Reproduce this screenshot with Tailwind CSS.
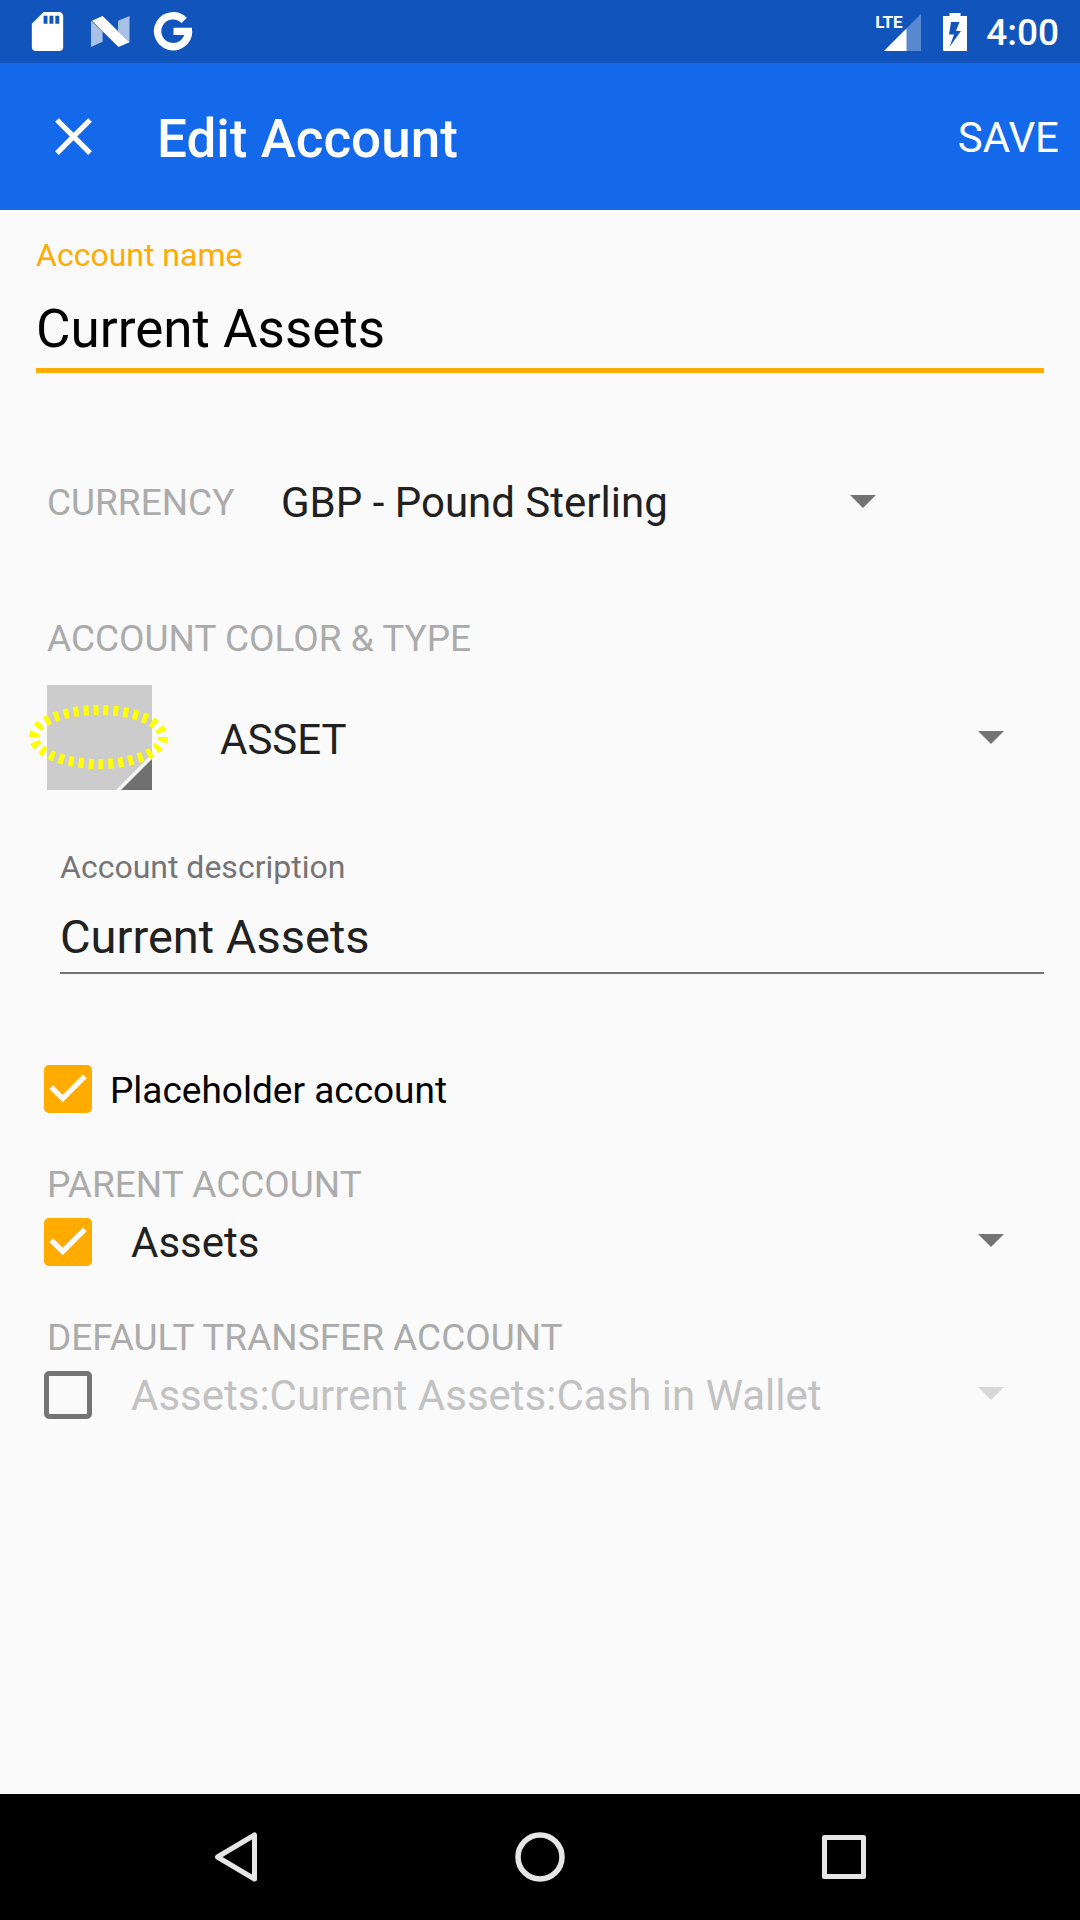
<!DOCTYPE html>
<html lang="en">
<head>
<meta charset="utf-8">
<meta name="viewport" content="width=device-width, initial-scale=1">
<title>Edit Account</title>
<script src="https://cdn.jsdelivr.net/npm/@tailwindcss/browser@4"></script>
</head>
<body class="flex min-h-screen flex-col bg-[#fafafa] font-[Roboto,sans-serif] text-[#212121]">

  <!-- System status bar -->
  <div class="flex h-[63px] items-center justify-between bg-[#1155bc] pr-[21px] pl-6 text-white">
    <div class="flex items-center gap-4">
      <svg class="size-[47px]" viewBox="0 0 24 24" fill="currentColor" aria-label="SD card"><path d="M18 2h-8L4 8v12c0 1.1.9 2 2 2h12c1.1 0 2-.9 2-2V4c0-1.1-.9-2-2-2zm-6 6h-2V4h2v4zm3 0h-2V4h2v4zm3 0h-2V4h2v4z"/></svg>
      <svg class="size-[47px]" viewBox="0 0 47 47" fill="currentColor" aria-label="Android Nougat"><path opacity=".63" d="M4 12.7L15.6 23.7V33.7L4 39zM31 12.7L42.5 8V34.3L31 23z"/><path d="M5 12.7L15.6 8L42.5 34.3L31.5 39z"/></svg>
      <svg class="size-[47px]" viewBox="0 0 47 47" fill="none" stroke="currentColor" stroke-width="7.4" aria-label="Google"><path d="M34.200 12.400A15.500 15.500 0 1 0 38.600 23.400M23.500 23.400H42"/></svg>
    </div>
    <div class="flex items-center">
      <div class="relative h-[38px] w-[46px]">
        <svg class="absolute right-0 bottom-0 size-[37px]" viewBox="0 0 37 37" fill="currentColor" aria-label="Mobile signal"><path opacity=".3" d="M37 0V37H0z"/><path d="M22.5 14.5V37H0z"/></svg>
        <span class="absolute top-0 left-0 text-[17px] leading-[18px] font-bold">LTE</span>
      </div>
      <svg class="ml-[22px] h-[38px] w-6" viewBox="0 0 24 38" fill="currentColor" fill-rule="evenodd" aria-label="Battery charging"><path d="M6.500 0h11v3H24v35H0V3h6.500zM8 9L6 21.500h5L6.500 34L18 18h-5l3.500-9z"/></svg>
      <time class="ml-[19px] pt-0.5 text-[37px] leading-[61px] font-medium">4:00</time>
    </div>
  </div>

  <!-- Toolbar -->
  <header class="flex h-[147px] items-center bg-[#1469eb] pr-[21px] pl-[42px] text-white">
    <button type="button" aria-label="Close" class="size-[63px]">
      <svg class="size-full" viewBox="0 0 24 24" fill="currentColor"><path d="M19 6.410L17.590 5 12 10.590 6.410 5 5 6.410 10.590 12 5 17.590 6.410 19 12 13.410 17.590 19 19 17.590 13.410 12z"/></svg>
    </button>
    <h1 class="ml-[52px] flex-1 pt-1 text-[53px] leading-[60px] font-medium">Edit Account</h1>
    <button type="submit" form="account" class="pt-0.5 text-[42px] leading-[60px]">SAVE</button>
  </header>

  <main class="flex-1">
    <form id="account" class="pt-[25px] pr-9 pl-9">

      <div class="flex flex-col">
        <label for="name" class="text-[32px] leading-10 text-[#ffab00]">Account name</label>
        <input id="name" type="text" value="Current Assets" class="mt-[15px] h-[83px] border-b-[5px] border-[#ffab00] text-[53px] text-black outline-none">
      </div>

      <div class="mt-[98px] flex h-[60px] items-center pl-[11px]">
        <label for="currency" class="w-[234px] pt-1 text-[37px] leading-10 text-[#ababab]">CURRENCY</label>
        <div class="mr-32 grid flex-1 items-center">
          <select id="currency" class="h-[60px] appearance-none text-[42px] outline-none [grid-area:1/1]"><option>GBP - Pound Sterling</option></select>
          <svg class="pointer-events-none mr-10 h-[13px] w-[26px] justify-self-end text-[#737373] [grid-area:1/1]" viewBox="0 0 26 13" fill="currentColor"><path d="M0 0h26L13 13z"/></svg>
        </div>
      </div>

      <label for="type" class="mt-[87px] block pl-[11px] text-[37px] leading-[42px] text-[#ababab]">ACCOUNT COLOR &amp; TYPE</label>
      <div class="mt-[25px] flex items-center pl-[11px]">
        <button type="button" aria-label="Account color" class="relative size-[105px] bg-[#cccccc]">
          <svg class="size-full" viewBox="0 0 105 105"><path fill="#f5f5f5" d="M105 69V105H69z"/><path fill="#707070" d="M105 74V105H74z"/></svg>
          <!-- Highlight ring round the swatch -->
          <svg class="absolute top-5 -left-[18px] h-16 w-[139px] max-w-none" viewBox="0 0 139 64" fill="none"><ellipse cx="69.500" cy="32" rx="64.500" ry="27" stroke="#ffff00" stroke-width="10" pathLength="300" stroke-dasharray="5 5"/></svg>
        </button>
        <div class="ml-[68px] grid flex-1 items-center">
          <select id="type" class="h-[60px] appearance-none text-[42px] outline-none [grid-area:1/1]"><option>ASSET</option></select>
          <svg class="pointer-events-none mr-10 h-[13px] w-[26px] justify-self-end text-[#737373] [grid-area:1/1]" viewBox="0 0 26 13" fill="currentColor"><path d="M0 0h26L13 13z"/></svg>
        </div>
      </div>

      <div class="mt-[57px] flex flex-col pl-6">
        <label for="description" class="text-[32px] leading-10 text-[#757575]">Account description</label>
        <input id="description" type="text" value="Current Assets" class="mt-[15px] h-[72px] border-b-2 border-[#737373] pb-0.5 text-[47px] outline-none">
      </div>

      <div class="mt-[91px] flex h-12 items-center pl-2">
        <span class="grid size-12">
          <input id="placeholder" type="checkbox" checked class="size-12 appearance-none rounded-[5px] border-[5px] border-[#757575] checked:border-[#ffab00] checked:bg-[#ffab00] [grid-area:1/1]">
          <svg class="pointer-events-none size-12 text-[#fafafa] [grid-area:1/1]" viewBox="3 3 18 18" fill="currentColor"><path d="M10 17l-5-5 1.410-1.410L10 14.170l7.590-7.590L19 8z"/></svg>
        </span>
        <label for="placeholder" class="ml-[18px] pt-1 text-[37px] leading-11 text-black">Placeholder account</label>
      </div>

      <label for="parent" class="mt-[51px] block pl-[11px] text-[37px] leading-[42px] text-[#ababab]">PARENT ACCOUNT</label>
      <div class="mt-3 flex h-12 items-center pl-2">
        <span class="grid size-12">
          <input type="checkbox" checked aria-label="Use parent account" class="size-12 appearance-none rounded-[5px] border-[5px] border-[#757575] checked:border-[#ffab00] checked:bg-[#ffab00] [grid-area:1/1]">
          <svg class="pointer-events-none size-12 text-[#fafafa] [grid-area:1/1]" viewBox="3 3 18 18" fill="currentColor"><path d="M10 17l-5-5 1.410-1.410L10 14.170l7.590-7.590L19 8z"/></svg>
        </span>
        <div class="mb-[3px] ml-[39px] grid flex-1 items-center">
          <select id="parent" class="h-[60px] appearance-none text-[42px] outline-none [grid-area:1/1]"><option>Assets</option></select>
          <svg class="pointer-events-none mr-10 h-[13px] w-[26px] justify-self-end text-[#737373] [grid-area:1/1]" viewBox="0 0 26 13" fill="currentColor"><path d="M0 0h26L13 13z"/></svg>
        </div>
      </div>

      <label for="transfer" class="mt-[51px] block pl-[11px] text-[37px] leading-[42px] text-[#ababab]">DEFAULT TRANSFER ACCOUNT</label>
      <div class="mt-3 flex h-12 items-center pl-2">
        <input type="checkbox" aria-label="Use default transfer account" class="size-12 appearance-none rounded-[5px] border-[5px] border-[#757575] checked:border-[#ffab00] checked:bg-[#ffab00]">
        <div class="mb-[3px] ml-[39px] grid flex-1 items-center">
          <select id="transfer" disabled class="h-[60px] appearance-none text-[42px] text-[#c2c2c2] opacity-100 outline-none [grid-area:1/1]"><option>Assets:Current Assets:Cash in Wallet</option></select>
          <svg class="pointer-events-none mr-10 h-[13px] w-[26px] justify-self-end text-[#d8d8d8] [grid-area:1/1]" viewBox="0 0 26 13" fill="currentColor"><path d="M0 0h26L13 13z"/></svg>
        </div>
      </div>
    </form>
  </main>

  <!-- System navigation bar -->
  <nav class="flex h-[126px] items-center justify-center gap-[240px] bg-black text-[#e6e6e6]">
    <button type="button" aria-label="Back" class="size-16">
      <svg class="size-full" viewBox="0 0 64 64" fill="none" stroke="currentColor" stroke-width="5" stroke-linejoin="round"><path d="M50.500 10V54L13.500 32z"/></svg>
    </button>
    <button type="button" aria-label="Home" class="size-16">
      <svg class="size-full" viewBox="0 0 64 64" fill="none" stroke="currentColor" stroke-width="5.500"><circle cx="32" cy="32" r="22"/></svg>
    </button>
    <button type="button" aria-label="Recent apps" class="size-16">
      <svg class="size-full" viewBox="0 0 64 64" fill="none" stroke="currentColor" stroke-width="5" stroke-linejoin="round"><path d="M12.500 12.500H51.500V51.500H12.500z"/></svg>
    </button>
  </nav>
</body>
</html>
